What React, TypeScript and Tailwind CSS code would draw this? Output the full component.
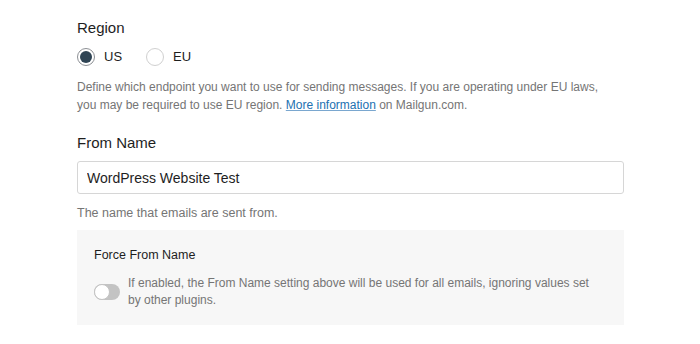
import { useState } from "react";

// Mailer settings: region + from name
const font = { fontFamily: '"Liberation Sans", Arial, sans-serif' };

const Radio = ({ checked, label, onClick }: { checked: boolean; label: string; onClick: () => void }) => (
  <label className="flex cursor-pointer items-center gap-[9px]" onClick={onClick}>
    <span
      className={`flex h-[18px] w-[18px] items-center justify-center rounded-full border ${
        checked ? "border-[#8c8f94] bg-white" : "border-[#d0d0d0] bg-white"
      }`}
    >
      {checked && <span className="h-[12px] w-[12px] rounded-full bg-[#2f4454]" />}
    </span>
    <span className="text-[13px] text-[#1e1e1e]">{label}</span>
  </label>
);

export default function App() {
  const [region, setRegion] = useState<"US" | "EU">("US");
  const [forceName, setForceName] = useState(false);

  return (
    <div className="h-[344px] w-[700px] bg-white pl-[77px] pt-[16px]" style={font}>
      <div className="w-[547px]">
        {/* Region */}
        <div className="text-[15px] leading-[24px] text-[#1e1e1e]">Region</div>
        <div className="mt-[7px] flex h-[20px] items-center gap-[24px]">
          <Radio checked={region === "US"} label="US" onClick={() => setRegion("US")} />
          <Radio checked={region === "EU"} label="EU" onClick={() => setRegion("EU")} />
        </div>
        <p className="mt-[11px] text-[12px] leading-[18px] text-[#757575]">
          Define which endpoint you want to use for sending messages. If you are operating under EU laws,
          <br />
          you may be required to use EU region.{" "}
          <a className="text-[#2271b1] underline decoration-[#7aa7cf]" href="#">
            More information
          </a>{" "}
          on Mailgun.com.
        </p>

        {/* From Name */}
        <div className="mt-[17px] text-[15px] leading-[24px] text-[#1e1e1e]">From Name</div>
        <input
          className="mt-[6px] block h-[33px] w-full rounded-[3px] border border-[#d6d6d6] px-[9px] text-[14px] text-[#1e1e1e] outline-none"
          defaultValue="WordPress Website Test"
        />
        <div className="mt-[10px] text-[12.5px] leading-[18px] text-[#757575]">The name that emails are sent from.</div>

        {/* Force From Name */}
        <div className="mt-[8px] bg-[#f7f7f7] pb-[16px] pl-[17px] pr-[16px] pt-[15px]">
          <div className="text-[12.5px] leading-[20px] text-[#1e1e1e]">Force From Name</div>
          <div className="mt-[10px] flex items-center gap-[8px]">
            <button
              className={`relative h-[16px] w-[26px] shrink-0 rounded-full ${forceName ? "bg-[#2271b1]" : "bg-[#c3c3c3]"}`}
              onClick={() => setForceName(!forceName)}
            >
              <span
                className={`absolute top-0 h-[16px] w-[16px] rounded-full border border-[#c3c3c3] bg-white ${
                  forceName ? "left-[10px]" : "left-0"
                }`}
              />
            </button>
            <p className="text-[12px] leading-[17px] text-[#757575]">
              If enabled, the From Name setting above will be used for all emails, ignoring values set
              <br />
              by other plugins.
            </p>
          </div>
        </div>
      </div>
    </div>
  );
}
